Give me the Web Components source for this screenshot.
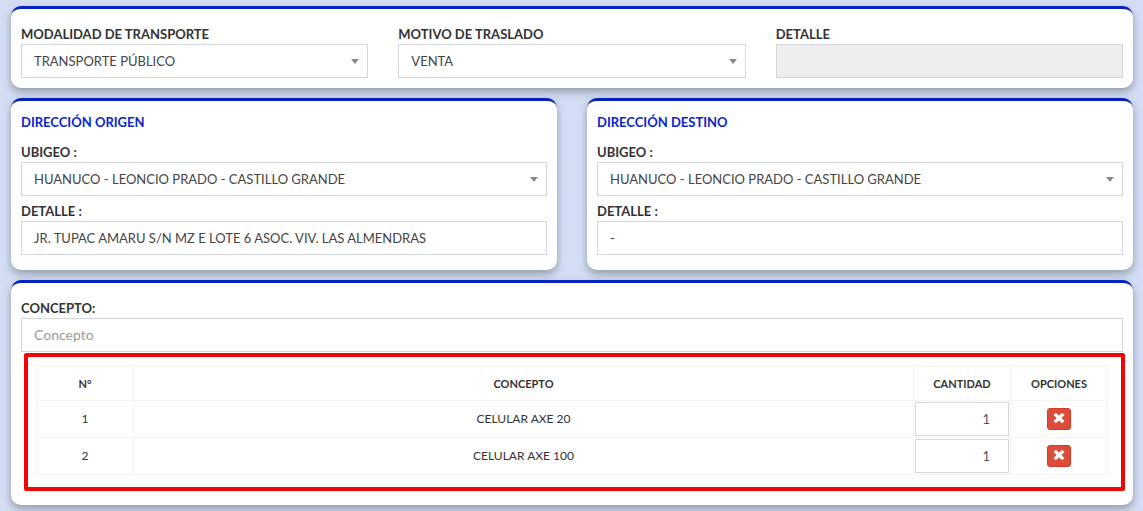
<!DOCTYPE html>
<html lang="es">
<head>
<meta charset="UTF-8">
<meta name="viewport" content="width=device-width, initial-scale=1">
<title>Guía de remisión</title>
<style>
  body {
    margin: 0;
    background-color: #d3def4;
    color: #333;
    font-family: Lato, "Liberation Sans", sans-serif;
    font-size: 13px;
    line-height: 20px;
  }
</style>
</head>
<body>
<guia-page>
  <panel-card>
    <field-row>
      <form-field type="select" label="MODALIDAD DE TRANSPORTE" value="TRANSPORTE PÚBLICO"></form-field>
      <form-field type="select" label="MOTIVO DE TRASLADO" value="VENTA"></form-field>
      <form-field label="DETALLE" disabled></form-field>
    </field-row>
  </panel-card>

  <field-row>
    <panel-card heading="DIRECCIÓN ORIGEN">
      <form-field type="select" label="UBIGEO :" value="HUANUCO - LEONCIO PRADO - CASTILLO GRANDE"></form-field>
      <form-field label="DETALLE :" value="JR. TUPAC AMARU S/N MZ E LOTE 6 ASOC. VIV. LAS ALMENDRAS"></form-field>
    </panel-card>
    <panel-card heading="DIRECCIÓN DESTINO">
      <form-field type="select" label="UBIGEO :" value="HUANUCO - LEONCIO PRADO - CASTILLO GRANDE"></form-field>
      <form-field label="DETALLE :" value="-"></form-field>
    </panel-card>
  </field-row>

  <panel-card>
    <concept-list>
      <form-field label="CONCEPTO:" placeholder="Concepto"></form-field>
      <concept-table slot="table"></concept-table>
    </concept-list>
  </panel-card>
</guia-page>

<script>
class GuiaPage extends HTMLElement {
  constructor() {
    super();
    this.attachShadow({ mode: 'open' });
    this.shadowRoot.innerHTML = `
      <style>
        :host {
          display: block;
        }

        main {
          display: flex;
          flex-direction: column;
          gap: 10px;
          padding: 6px 10px 6px 11px;
        }
      </style>

      <main><slot></slot></main>
    `;
  }
}

customElements.define('guia-page', GuiaPage);

class FieldRow extends HTMLElement {
  constructor() {
    super();
    this.attachShadow({ mode: 'open' });
    this.shadowRoot.innerHTML = `
      <style>
        :host {
          display: grid;
          grid-auto-flow: column;
          grid-auto-columns: minmax(0, 1fr);
          gap: 30px;
        }
      </style>

      <slot></slot>
    `;
  }
}

customElements.define('field-row', FieldRow);

class PanelCard extends HTMLElement {
  constructor() {
    super();
    this.attachShadow({ mode: 'open' });
  }

  connectedCallback() {
    this.render();
  }

  render() {
    const heading = this.getAttribute('heading');

    this.shadowRoot.innerHTML = `
      <style>
        :host {
          display: block;
          min-width: 0;
        }

        section {
          display: flex;
          flex-direction: column;
          gap: 5px;
          padding: 15px 10px 10px;
          background-color: white;
          border-top: 3px solid #0723bd;
          border-radius: 10px;
          box-shadow: 0 4px 8px rgba(0, 0, 0, 0.3);
        }

        section.titled {
          padding: 11px 10px 15px;
        }

        h2 {
          margin: 0 0 5px;
          color: #0b24cc;
          font-size: 13px;
          font-weight: 700;
          line-height: 20px;
        }
      </style>

      <section class="${heading ? 'titled' : ''}">
        ${heading ? `<h2>${heading}</h2>` : ''}
        <slot></slot>
      </section>
    `;
  }
}

customElements.define('panel-card', PanelCard);

class FormField extends HTMLElement {
  constructor() {
    super();
    this.attachShadow({ mode: 'open' });
  }

  connectedCallback() {
    this.render();
  }

  control() {
    const value = this.getAttribute('value') || '';
    const placeholder = this.getAttribute('placeholder') || '';
    const disabled = this.hasAttribute('disabled') ? 'disabled' : '';

    if (this.getAttribute('type') === 'select') {
      return `
        <div class="select">
          <select id="control"><option>${value}</option></select>
          <svg width="8" height="5" viewBox="0 0 8 5" aria-hidden="true">
            <path d="M0 0h8L4 5z" fill="#888"/>
          </svg>
        </div>
      `;
    }

    return `<input type="text" id="control" value="${value}" placeholder="${placeholder}" ${disabled}>`;
  }

  render() {
    this.shadowRoot.innerHTML = `
      <style>
        :host {
          display: block;
          min-width: 0;
        }

        label {
          display: block;
          font-weight: 700;
        }

        input, select {
          display: block;
          box-sizing: border-box;
          width: 100%;
          height: 34px;
          margin: 0;
          padding: 6px 12px;
          border: 1px solid #d2d6de;
          border-radius: 0;
          background-color: white;
          color: #444;
          font: inherit;
          appearance: none;
        }

        input:disabled {
          background-color: #eee;
        }

        input::placeholder {
          color: #999;
          opacity: 1;
          font-size: 14px;
        }

        .select {
          display: grid;
          align-items: center;
        }

        .select > * {
          grid-area: 1 / 1;
        }

        svg {
          justify-self: end;
          margin-right: 9px;
          pointer-events: none;
        }
      </style>

      <label for="control">${this.getAttribute('label')}</label>
      ${this.control()}
    `;
  }
}

customElements.define('form-field', FormField);

class ConceptList extends HTMLElement {
  constructor() {
    super();
    this.attachShadow({ mode: 'open' });
    this.shadowRoot.innerHTML = `
      <style>
        :host {
          display: block;
        }

        /* the highlight runs slightly past the right edge of the input */
        .highlight {
          margin: 1px -2px 4px 3px;
          padding: 9px 13px 12px 8px;
          border: 4px solid #f40505;
          border-radius: 2px;
        }
      </style>

      <slot></slot>
      <div class="highlight"><slot name="table"></slot></div>
    `;
  }
}

customElements.define('concept-list', ConceptList);

class ConceptTable extends HTMLElement {
  constructor() {
    super();
    this.attachShadow({ mode: 'open' });
    this.items = [
      { name: 'CELULAR AXE 20', quantity: 1 },
      { name: 'CELULAR AXE 100', quantity: 1 },
    ];
  }

  connectedCallback() {
    this.render();
    this.setupEventListeners();
  }

  setupEventListeners() {
    this.shadowRoot.addEventListener('click', (event) => {
      const button = event.target.closest('button');
      if (!button) return;

      this.items.splice(Number(button.dataset.index), 1);
      this.render();
    });
  }

  row(item, index) {
    return `
      <tr>
        <td>${index + 1}</td>
        <td>${item.name}</td>
        <td class="quantity">
          <input type="text" inputmode="numeric" value="${item.quantity}" aria-label="Cantidad de ${item.name}">
        </td>
        <td>
          <button type="button" data-index="${index}" aria-label="Quitar ${item.name}">
            <svg width="12" height="12" viewBox="0 0 12 12" aria-hidden="true">
              <path fill="white" d="M2.7.8 6 3.6 9.3.8l.8 1 1.4 1.3L8.4 6l3.1 2.9-1.4 1.3-.8 1L6 8.4l-3.3 2.8-.8-1L.5 8.9 3.6 6 .5 3.1l1.4-1.3z"/>
            </svg>
          </button>
        </td>
      </tr>
    `;
  }

  render() {
    this.shadowRoot.innerHTML = `
      <style>
        :host {
          display: block;
        }

        table {
          width: 100%;
          border-collapse: collapse;
          table-layout: fixed;
          font-size: 12px;
          text-align: center;
        }

        th, td {
          box-sizing: border-box;
          height: 37px;
          padding: 0;
          border: 1px solid #f4f4f4;
        }

        th {
          height: 34px;
          font-size: 11px;
          font-weight: 700;
        }

        .narrow {
          width: 97px;
        }

        td.quantity {
          padding: 1px;
        }

        input {
          display: block;
          box-sizing: border-box;
          width: 100%;
          height: 34px;
          margin: 0;
          padding: 6px 18px 6px 12px;
          border: 1px solid #d2d6de;
          border-radius: 0;
          background-color: white;
          color: #555;
          font: inherit;
          font-size: 13px;
          text-align: right;
        }

        button {
          display: inline-flex;
          align-items: center;
          justify-content: center;
          width: 24px;
          height: 22px;
          padding: 0 0 2px;
          border: 1px solid #d73925;
          border-radius: 3px;
          background-color: #dd4b39;
          vertical-align: middle;
          cursor: pointer;
        }
      </style>

      <table>
        <thead>
          <tr>
            <th class="narrow">N°</th>
            <th>CONCEPTO</th>
            <th class="narrow">CANTIDAD</th>
            <th class="narrow">OPCIONES</th>
          </tr>
        </thead>
        <tbody>
          ${this.items.map((item, index) => this.row(item, index)).join('')}
        </tbody>
      </table>
    `;
  }
}

customElements.define('concept-table', ConceptTable);
</script>
</body>
</html>
